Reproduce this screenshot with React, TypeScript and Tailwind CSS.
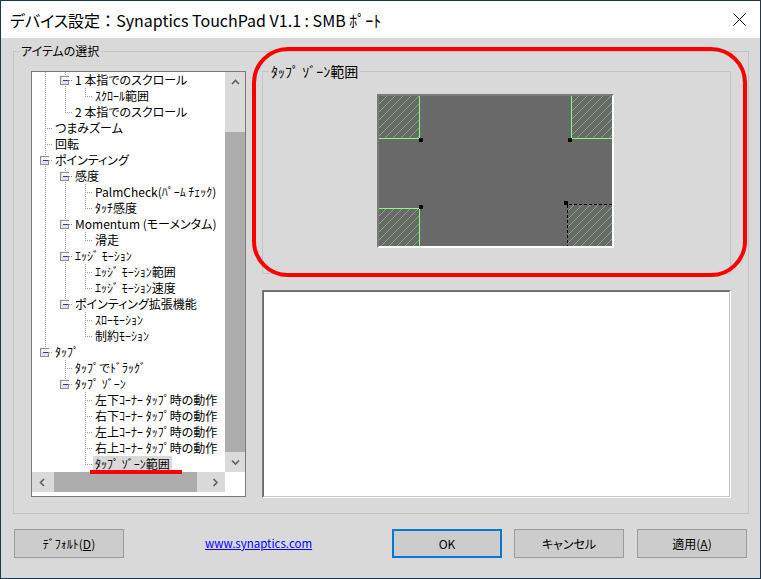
import React from "react";

type Row = {
  t: string;
  lv: number;
  anc: number[];
  half?: boolean;
  box?: boolean;
  sel?: boolean;
};

const rows: Row[] = [
  { t: "1 本指でのスクロール", lv: 1, anc: [0], box: true },
  { t: "ｽｸﾛｰﾙ範囲", lv: 2, anc: [0, 1], half: true },
  { t: "2 本指でのスクロール", lv: 1, anc: [0], half: true },
  { t: "つまみズーム", lv: 0, anc: [] },
  { t: "回転", lv: 0, anc: [] },
  { t: "ポインティング", lv: 0, anc: [], box: true },
  { t: "感度", lv: 1, anc: [0], box: true },
  { t: "PalmCheck(ﾊﾟｰﾑ ﾁｪｯｸ)", lv: 2, anc: [0, 1] },
  { t: "ﾀｯﾁ感度", lv: 2, anc: [0, 1], half: true },
  { t: "Momentum (モーメンタム)", lv: 1, anc: [0], box: true },
  { t: "滑走", lv: 2, anc: [0, 1], half: true },
  { t: "ｴｯｼﾞ ﾓｰｼｮﾝ", lv: 1, anc: [0], box: true },
  { t: "ｴｯｼﾞ ﾓｰｼｮﾝ範囲", lv: 2, anc: [0, 1] },
  { t: "ｴｯｼﾞ ﾓｰｼｮﾝ速度", lv: 2, anc: [0, 1], half: true },
  { t: "ポインティング拡張機能", lv: 1, anc: [0], box: true, half: true },
  { t: "ｽﾛｰﾓｰｼｮﾝ", lv: 2, anc: [0] },
  { t: "制約ﾓｰｼｮﾝ", lv: 2, anc: [0], half: true },
  { t: "ﾀｯﾌﾟ", lv: 0, anc: [], box: true, half: true },
  { t: "ﾀｯﾌﾟでﾄﾞﾗｯｸﾞ", lv: 1, anc: [] },
  { t: "ﾀｯﾌﾟ ｿﾞｰﾝ", lv: 1, anc: [], box: true, half: true },
  { t: "左下ｺｰﾅｰ ﾀｯﾌﾟ時の動作", lv: 2, anc: [] },
  { t: "右下ｺｰﾅｰ ﾀｯﾌﾟ時の動作", lv: 2, anc: [] },
  { t: "左上ｺｰﾅｰ ﾀｯﾌﾟ時の動作", lv: 2, anc: [] },
  { t: "右上ｺｰﾅｰ ﾀｯﾌﾟ時の動作", lv: 2, anc: [] },
  { t: "ﾀｯﾌﾟ ｿﾞｰﾝ範囲", lv: 2, anc: [], half: true, sel: true },
];

const lx = (l: number) => 13 + 20 * l;
const LINE = "#a0a0a0";

function RowLines({ r }: { r: Row }) {
  const x = lx(r.lv);
  const w = x + 8;
  return (
    <svg width={w} height={16} className="shrink-0" shapeRendering="crispEdges">
      {r.anc.map((l) => (
        <line key={l} x1={lx(l) + 0.5} y1={0} x2={lx(l) + 0.5} y2={16} stroke={LINE} strokeDasharray="1 1" />
      ))}
      <line x1={x + 0.5} y1={0} x2={x + 0.5} y2={r.half ? 9 : 16} stroke={LINE} strokeDasharray="1 1" />
      <line x1={x + 2} y1={8.5} x2={w} y2={8.5} stroke={LINE} strokeDasharray="1 1" />
      {r.box && (
        <g>
          <rect x={x - 4.5} y={4.5} width={8} height={8} fill="#e2e2e2" stroke="#8e8f8f" />
          <rect x={x - 3} y={5} width={7} height={3} fill="#f6f6f6" />
          <line x1={x - 2} y1={8.5} x2={x + 3} y2={8.5} stroke="#1f3f9c" />
        </g>
      )}
    </svg>
  );
}

function Chevron({ dir }: { dir: "up" | "down" | "left" | "right" }) {
  const pts =
    dir === "up"
      ? "1,5 4.5,1.5 8,5"
      : dir === "down"
      ? "1,1.5 4.5,5 8,1.5"
      : dir === "left"
      ? "5,1 1.5,4.5 5,8"
      : "1.5,1 5,4.5 1.5,8";
  const w = dir === "up" || dir === "down" ? 9 : 7;
  const h = dir === "up" || dir === "down" ? 7 : 9;
  return (
    <svg width={w} height={h}>
      <polyline points={pts} fill="none" stroke="#5f5f5f" strokeWidth="1.6" />
    </svg>
  );
}

function Tree() {
  return (
    <div className="w-[215px] h-[426px] border border-[#7a7a7a] bg-white flex flex-col shrink-0">
      <div className="flex h-[400px]">
        <div className="w-[193px] h-[400px] overflow-hidden flex flex-col">
          {rows.map((r, i) => (
            <div key={i} className="flex h-[16px] items-stretch">
              <RowLines r={r} />
              <div
                className={
                  "h-[16px] leading-[16px] px-[2px] text-[12px] whitespace-nowrap " +
                  (r.sel ? "bg-[#d9d9d9]" : "")
                }
              >
                {r.t}
              </div>
            </div>
          ))}
        </div>
        <div className="w-[20px] h-[400px] bg-[#dadada] flex flex-col">
          <div className="h-[20px] flex items-center justify-center">
            <Chevron dir="up" />
          </div>
          <div className="h-[40px]" />
          <div className="h-[320px] bg-[#adadad]" />
          <div className="h-[20px] flex items-center justify-center">
            <Chevron dir="down" />
          </div>
        </div>
      </div>
      <div className="flex h-[20px]">
        <div className="w-[193px] h-[20px] bg-[#dadada] flex items-center">
          <div className="w-[20px] h-[20px] flex items-center justify-center">
            <Chevron dir="left" />
          </div>
          <div className="ml-[2px] w-[143px] h-[20px] bg-[#adadad]" />
          <div className="ml-auto w-[20px] h-[20px] flex items-center justify-center">
            <Chevron dir="right" />
          </div>
        </div>
        <div className="w-[20px] h-[20px] bg-white" />
      </div>
    </div>
  );
}

function TouchPad() {
  const green = "#80ff80";
  return (
    <div className="ml-[114px] w-[237px] h-[154px] border-2 border-t-[#7a7a7a] border-l-[#7a7a7a] border-r-white border-b-white">
      <svg width={233} height={150} className="block" shapeRendering="crispEdges">
        <defs>
          <pattern id="hatch" width="8" height="8" patternUnits="userSpaceOnUse">
            <path d="M0 8 L8 0 M-1 1 L1 -1 M7 9 L9 7" stroke="#86e886" strokeWidth="0.9" shapeRendering="auto" opacity="0.6" />
          </pattern>
        </defs>
        <rect width={233} height={150} fill="#696969" />
        {/* top-left */}
        <rect x={0} y={0} width={40} height={42} fill="url(#hatch)" />
        <path d={`M40.5 0 V42.5 H0`} stroke={green} fill="none" />
        <rect x={40} y={42} width={4} height={4} fill="#000" />
        {/* top-right */}
        <rect x={193} y={0} width={40} height={42} fill="url(#hatch)" />
        <path d={`M192.5 0 V42.5 H233`} stroke={green} fill="none" />
        <rect x={189} y={42} width={4} height={4} fill="#000" />
        {/* bottom-left */}
        <rect x={0} y={113} width={40} height={37} fill="url(#hatch)" />
        <path d={`M0 112.5 H40.5 V150`} stroke={green} fill="none" />
        <rect x={40} y={109} width={4} height={4} fill="#000" />
        {/* bottom-right */}
        <rect x={189} y={109} width={44} height={41} fill="url(#hatch)" />
        <path d={`M233 108.5 H188.5 V150`} stroke="#000" fill="none" strokeDasharray="3 2" />
        <rect x={185} y={105} width={4} height={4} fill="#000" />
      </svg>
    </div>
  );
}

export default function App() {
  return (
    <div className="relative w-[761px] h-[579px] flex flex-col border border-[#1d3a4c] bg-[#d9d9d9] overflow-hidden text-black font-['Noto_Sans_CJK_JP','Noto_Sans',sans-serif] [font-feature-settings:'palt']">
      {/* Title bar */}
      <div className="h-[37px] shrink-0 bg-white flex items-center pl-[9px] pr-[14px]">
        <span className="text-[16px] leading-[20px] whitespace-nowrap">
          デバイス設定<span className="[font-feature-settings:normal]">：</span>Synaptics TouchPad V1.1 : SMB ﾎﾟｰﾄ
        </span>
        <svg className="ml-auto" width="13" height="13" shapeRendering="crispEdges">
          <path d="M0.5 0.5 L12.5 12.5 M12.5 0.5 L0.5 12.5" stroke="#000" strokeWidth="1" shapeRendering="auto" />
        </svg>
      </div>

      {/* Body */}
      <div className="flex-1 flex flex-col pl-[12px] pr-[11px] pt-[13px]">
        <div className="h-[463px] border border-[#c4c4c4] flex flex-col">
          <div className="-mt-[9px] ml-[5px] self-start bg-[#d9d9d9] px-[2px] text-[12px] leading-[16px] h-[16px]">
            アイテムの選択
          </div>
          <div className="flex pl-[17px] mt-[12px]">
            <Tree />
            <div className="ml-[16px] w-[469px] flex flex-col">
              <div className="h-[203px] border border-[#c4c4c4] flex flex-col">
                <div className="-mt-[9px] ml-[6px] self-start bg-[#d9d9d9] px-[2px] text-[14px] leading-[16px] h-[16px]">
                  ﾀｯﾌﾟ ｿﾞｰﾝ範囲
                </div>
                <div className="mt-[15px]">
                  <TouchPad />
                </div>
              </div>
              <div className="mt-[16px] h-[208px] border border-t-[#7a7a7a] border-l-[#7a7a7a] border-r-white border-b-white flex">
                <div className="flex-1 border border-t-[#696969] border-l-[#696969] border-r-[#c8c8c8] border-b-[#c8c8c8] bg-white" />
              </div>
            </div>
          </div>
        </div>

        {/* Buttons */}
        <div className="flex items-center mt-[15px] h-[29px] text-[12px]">
          <button className="ml-[1px] w-[110px] h-[29px] bg-[#cccccc] border border-[#9b9b9b] flex items-center justify-center">
            ﾃﾞﾌｫﾙﾄ(<span className="underline">D</span>)
          </button>
          <a className="ml-[81px] text-[#0000ff] underline whitespace-nowrap text-[11.5px]">www.synaptics.com</a>
          <div className="ml-auto mr-[2px] flex items-center">
            <button className="w-[110px] h-[29px] bg-[#cccccc] border-2 border-[#0078d7] flex items-center justify-center">
              OK
            </button>
            <button className="ml-[12px] w-[110px] h-[29px] bg-[#cccccc] border border-[#9b9b9b] flex items-center justify-center">
              キャンセル
            </button>
            <button className="ml-[13px] w-[110px] h-[29px] bg-[#cccccc] border border-[#9b9b9b] flex items-center justify-center">
              適用(<span className="underline">A</span>)
            </button>
          </div>
        </div>
      </div>

      {/* Red annotations */}
      <div className="absolute left-[251px] top-[46px] w-[495px] h-[230px] border-[4px] border-[#ff0000] rounded-[36px] pointer-events-none" />
      <div className="absolute left-[89px] top-[469px] w-[92px] h-[4px] bg-[#ff0000]" />
    </div>
  );
}
